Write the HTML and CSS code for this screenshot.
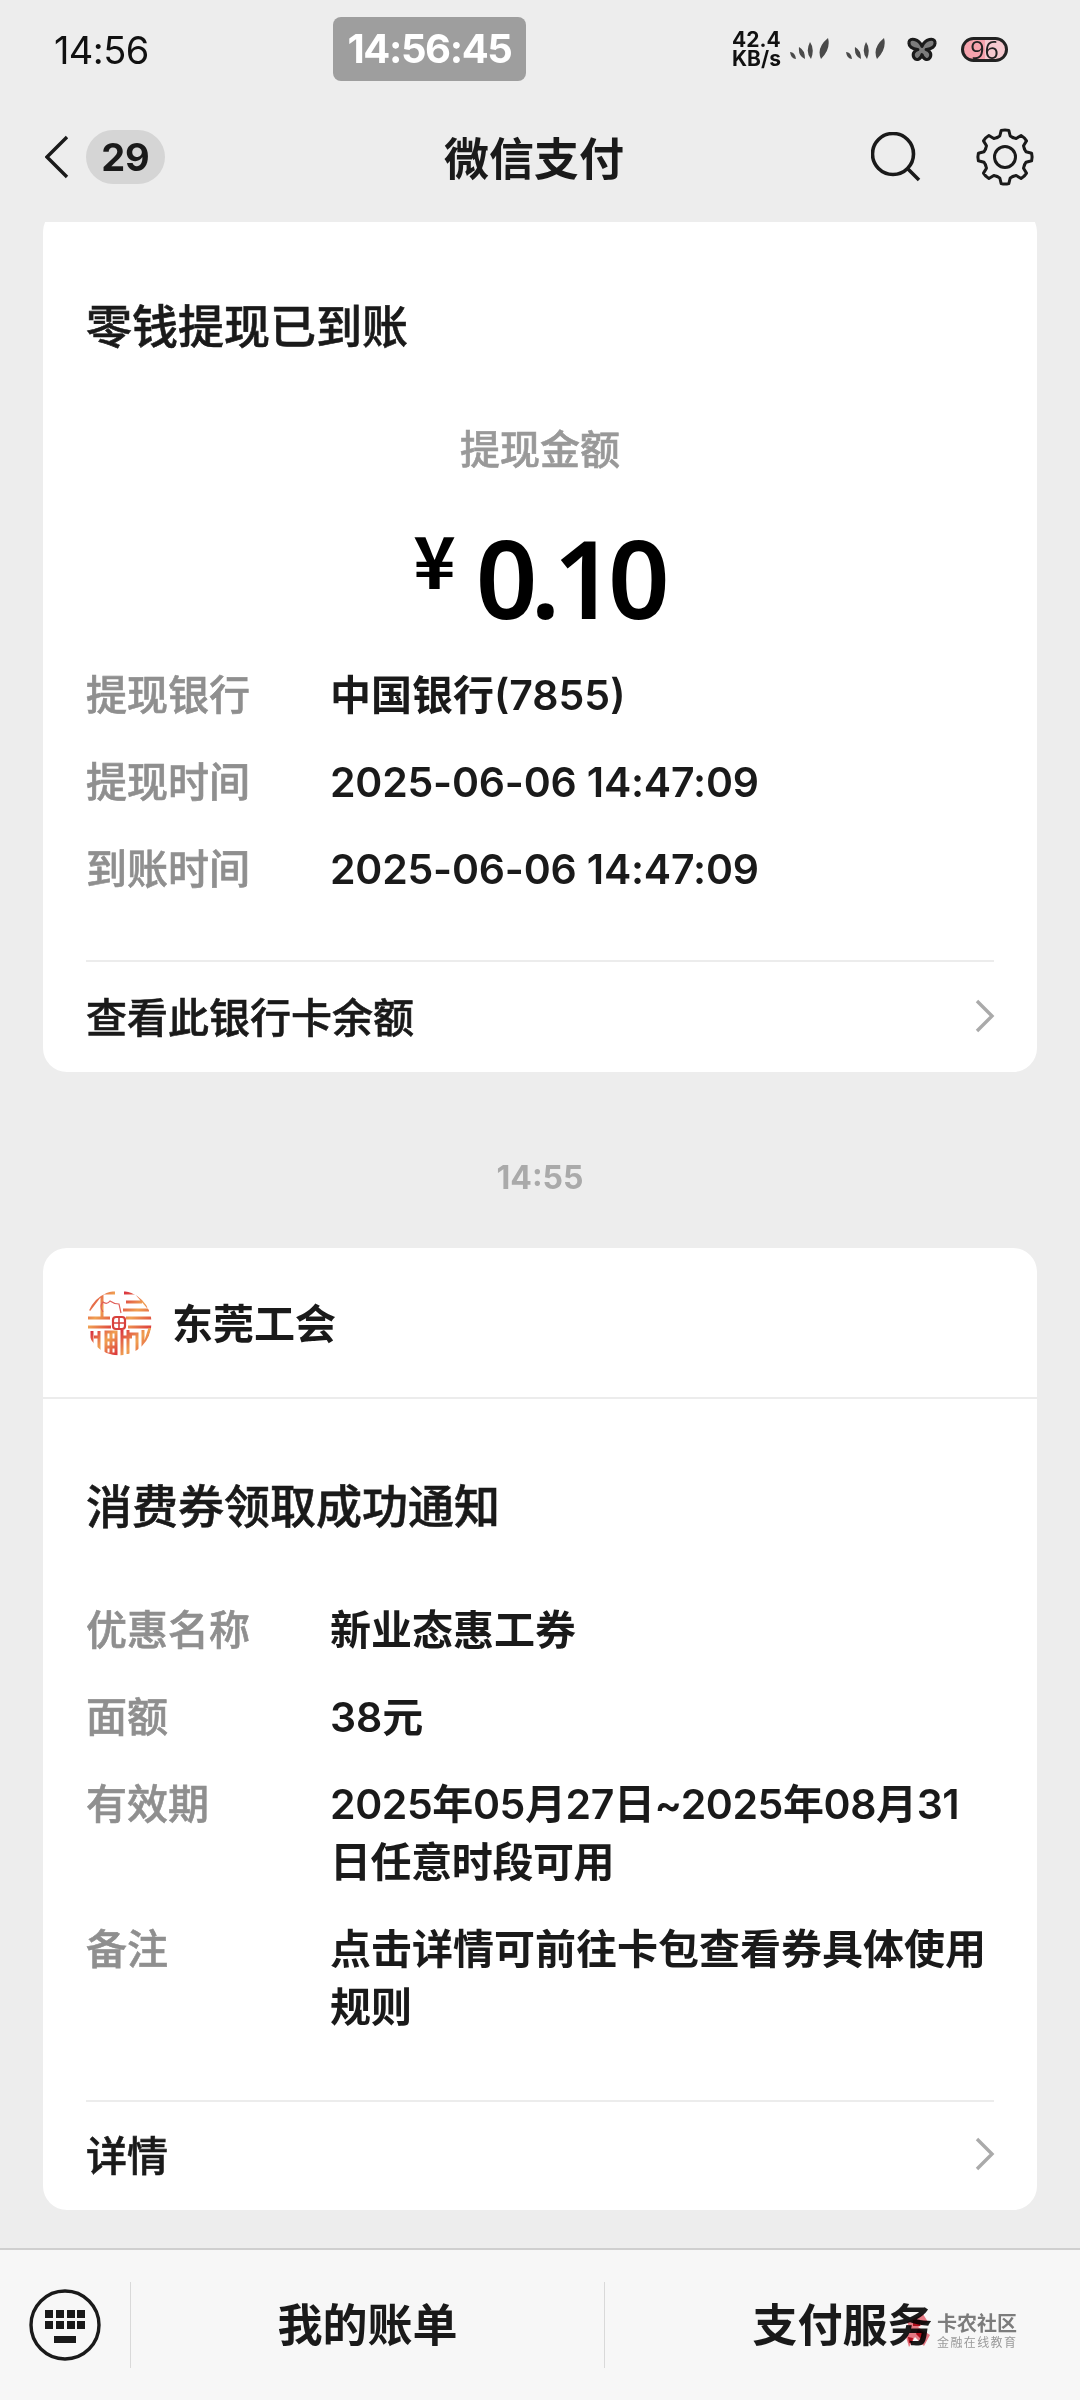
FILE: index.html
```html
<!DOCTYPE html>
<html lang="zh-CN">
<head>
<meta charset="utf-8">
<title>微信支付</title>
<link rel="stylesheet" href="styles.css">
</head>
<body>
<div class="phone">
  <header class="status">
    <span class="clock">14:56</span>
    <span class="timer">14:56:45</span>
    <div class="status-right">
      <div class="speed"><span>42.4</span><span>KB/s</span></div>
      <svg class="signal" viewBox="0 0 40 24"><path d="M0 15q5 0 6 7q-5 0-6-7zM9 10q6 3 6 12q-7-3-6-12zM20 5q5 7 1 17q-6-7-1-17zM38 1q3 11-7 21q-5-11 7-21z"/></svg>
      <svg class="signal s2" viewBox="0 0 40 24"><path d="M0 15q5 0 6 7q-5 0-6-7zM9 10q6 3 6 12q-7-3-6-12zM20 5q5 7 1 17q-6-7-1-17zM38 1q3 11-7 21q-5-11 7-21z"/></svg>
      <svg class="fly" viewBox="0 0 28 24"><path d="M14 9C11 2 2 0 1.500 5c-.5 4 3 6.500 8.500 7-4 1-5.500 5-3.500 8 2 3 6.500 1.500 7.500-3 1 4.500 5.500 6 7.500 3 2-3 .5-7-3.500-8 5.500-.5 9-3 8.500-7C26 0 17 2 14 9z" fill="#7c7c7c" stroke="#1b1b1b" stroke-width="3" stroke-linejoin="round"/></svg>
      <div class="battery"><span>96</span></div>
    </div>
  </header>

  <nav class="nav">
    <div class="nav-left">
      <svg class="back" viewBox="0 0 24 44"><path d="M22 2 2 22l20 20" fill="none" stroke="#1a1a1a" stroke-width="3.400"/></svg>
      <span class="count">29</span>
    </div>
    <h1 class="nav-title">微信支付</h1>
    <div class="nav-right">
      <svg class="search" viewBox="0 0 50 50"><circle cx="22" cy="22" r="20.500" fill="none" stroke="#1a1a1a" stroke-width="3.600"/><path d="m36 36 12 12" stroke="#1a1a1a" stroke-width="3.600"/></svg>
      <svg class="gear" viewBox="-30 -30 60 60">
        <defs><path id="tooth" d="M-8.040-19.400-5.200-21-3.800-26.600Q0-27.600 3.800-26.600L5.200-21 8.040-19.400" fill="none" stroke="#1a1a1a" stroke-width="3" stroke-linejoin="round" stroke-linecap="round"/></defs>
        <use href="#tooth"/><use href="#tooth" transform="rotate(45)"/><use href="#tooth" transform="rotate(90)"/><use href="#tooth" transform="rotate(135)"/><use href="#tooth" transform="rotate(180)"/><use href="#tooth" transform="rotate(225)"/><use href="#tooth" transform="rotate(270)"/><use href="#tooth" transform="rotate(315)"/>
        <circle r="10.500" fill="none" stroke="#1a1a1a" stroke-width="3"/>
      </svg>
    </div>
  </nav>

  <main class="feed">
    <section class="card card-first">
      <h2 class="card-title">零钱提现已到账</h2>
      <div class="amount-label">提现金额</div>
      <div class="amount"><span class="yen">¥</span><span class="sum">0.10</span></div>
      <dl class="rows">
        <div class="row"><dt>提现银行</dt><dd>中国银行(7855)</dd></div>
        <div class="row"><dt>提现时间</dt><dd class="num">2025-06-06 14:47:09</dd></div>
        <div class="row"><dt>到账时间</dt><dd class="num">2025-06-06 14:47:09</dd></div>
      </dl>
      <div class="link link-first">
        <span>查看此银行卡余额</span>
        <svg class="chev" viewBox="0 0 22 36"><path d="m3 3 15 15L3 33" fill="none" stroke="#aaa" stroke-width="3.400"/></svg>
      </div>
    </section>

    <div class="time">14:55</div>

    <section class="card">
      <div class="brand">
        <svg class="logo" viewBox="0 0 66 66">
          <defs>
            <linearGradient id="lg" x1="0" y1="0" x2="1" y2="1"><stop offset="0" stop-color="#d92f3f"/><stop offset=".5" stop-color="#f0a152"/><stop offset="1" stop-color="#dc3a3c"/></linearGradient>
            <clipPath id="lc"><circle cx="33" cy="33" r="32.500"/></clipPath>
          </defs>
          <g clip-path="url(#lc)" fill="none" stroke="url(#lg)" stroke-width="3">
            <path d="M3 20 16 3h13M16 3v24M2 28h22M2 37h23"/>
            <path d="M38 3h12l12 14M40 12h16M37 20h26M40 28h26M42 37h24"/>
            <path d="M6 41v20M13 41v22M8 47h6M20 42h10v22H20zM20 50h10M20 57h10M25 42v22"/>
            <path d="M36 40v26M36 47h10M42 40v24M42 44h9v20M57 40v20M64 38l-7 22"/>
            <path d="M17 22q-4-6 0-10 4 3 7-1 4 3 9 3l2 9" stroke="#e0605a" stroke-width="1.200"/>
          </g>
          <rect x="27" y="27" width="12" height="12" rx="3" fill="#fff" stroke="#d8413c" stroke-width="2.200"/>
          <path d="M33 27v12M27 33h12" stroke="#d8413c" stroke-width="1.600"/>
        </svg>
        <span class="brand-name">东莞工会</span>
      </div>
      <h2 class="card-title title-second">消费券领取成功通知</h2>
      <dl class="rows rows-second">
        <div class="row"><dt>优惠名称</dt><dd>新业态惠工券</dd></div>
        <div class="row"><dt>面额</dt><dd>38元</dd></div>
        <div class="row"><dt>有效期</dt><dd class="mixed">2025年05月27日~2025年08月31日任意时段可用</dd></div>
        <div class="row"><dt>备注</dt><dd>点击详情可前往卡包查看券具体使用规则</dd></div>
      </dl>
      <div class="link link-second">
        <span>详情</span>
        <svg class="chev" viewBox="0 0 22 36"><path d="m3 3 15 15L3 33" fill="none" stroke="#aaa" stroke-width="3.400"/></svg>
      </div>
    </section>
  </main>

  <footer class="bar">
    <div class="kb-cell">
      <svg class="kb" viewBox="0 0 72 74">
        <circle cx="36" cy="37" r="34" fill="none" stroke="#1a1a1a" stroke-width="3.400"/>
        <g fill="#1a1a1a"><rect x="16" y="22" width="8" height="8"/><rect x="27" y="22" width="8" height="8"/><rect x="38" y="22" width="8" height="8"/><rect x="48" y="22" width="8" height="8"/><rect x="16" y="33" width="8" height="8"/><rect x="27" y="33" width="8" height="8"/><rect x="38" y="33" width="8" height="8"/><rect x="48" y="33" width="8" height="8"/><rect x="25" y="48" width="22" height="7"/></g>
      </svg>
    </div>
    <div class="bar-item">我的账单</div>
    <div class="bar-item">支付服务</div>
    <div class="mark">
      <svg class="mark-icon" viewBox="0 0 28 34"><path d="M2 8 18 0l5 8-10 5 12 8-6 11-9-9-6 10-3-10 5-6z" fill="#ee7d88"/><path d="M8 6h7v6H8zM13 15l6 4-3 6-5-5zM3 23l5 1-1 5H4z" fill="#b50f1e"/></svg>
      <div class="mark-text"><span class="mark-a">卡农社区</span><span class="mark-b">金融在线教育</span></div>
    </div>
  </footer>
</div>
</body>
</html>
```

FILE: styles.css
```css
* { box-sizing: border-box; margin: 0; padding: 0; }
html, body { width: 1080px; height: 2400px; overflow: hidden; }
body { background: #ededed; color: #1a1a1a; font-family: "Noto Sans CJK SC", "Noto Sans", sans-serif; }
.phone { width: 1080px; height: 2400px; display: flex; flex-direction: column; }

.status { height: 100px; flex: none; display: flex; align-items: flex-start; padding: 17px 0 0 54px; }
.clock { font: 400 38px/66px Inter, sans-serif; color: #111; width: 279px; letter-spacing: -.6px; }
.timer { width: 193px; height: 64px; background: #9e9e9e; border-radius: 8px; color: #fff; font: 700 40px/64px Inter, sans-serif; text-align: center; letter-spacing: -1.400px; }
.status-right { display: flex; align-items: center; margin-left: 206px; height: 64px; }
.speed { display: flex; flex-direction: column; font: 700 21px/19px Inter, sans-serif; color: #111; width: 58px; }
.signal { width: 40px; height: 24px; fill: #4a4a4a; }
.s2 { margin-left: 16px; }
.fly { width: 30px; height: 25px; margin-left: 21px; }
.battery { width: 47px; height: 25px; margin-left: 24px; border: 3px solid #222; border-radius: 13px; background: linear-gradient(90deg, #f5a3ad 0 50%, #f5c9cf 50%); text-align: center; }
.battery span { display: block; font: 400 25px/19px "Open Sans", sans-serif; color: #222; }

.nav { height: 122px; flex: none; display: flex; align-items: center; padding: 0 0 8px 45px; position: relative; z-index: 2; background: #ededed; }
.nav-left { display: flex; align-items: center; width: 399px; }
.back { width: 24px; height: 44px; }
.count { width: 79px; height: 54px; margin-left: 17px; border-radius: 27px; background: #d5d5d5; font: 700 38px/54px Inter, sans-serif; text-align: center; }
.nav-title { font-size: 45px; line-height: 60px; font-weight: 700; width: 179px; white-space: nowrap; }
.nav-right { display: flex; align-items: center; margin-left: 248px; }
.search { width: 50px; height: 50px; }
.gear { width: 60px; height: 60px; margin-left: 54px; }

.feed { flex: 1; min-height: 0; overflow: hidden; padding: 0 43px; border-bottom: 2px solid #cfcfcf; }
.card { background: #fff; border-radius: 24px; }
.card-first { margin-top: -14px; padding: 84px 43px 0; height: 864px; }
.card-title { font-size: 46px; line-height: 62px; font-weight: 500; color: #1a1a1a; white-space: nowrap; -webkit-text-stroke: .6px #1a1a1a; }
.amount-label { margin-top: 66px; text-align: center; color: #999; font-size: 40px; line-height: 54px; font-weight: 500; -webkit-text-stroke: .6px #999; }
.amount { display: flex; justify-content: center; align-items: flex-start; color: #000; height: 120px; margin-top: 44px; }
.yen { font: 700 72px/80px "Noto Sans CJK SC", sans-serif; margin-right: 20px; margin-left: -4px; }
.sum { font: 600 108px/120px "Noto Sans", sans-serif; letter-spacing: -7px; }
.rows { display: flex; flex-direction: column; margin-top: 28px; }
.row { display: flex; font-size: 41px; line-height: 58px; margin-bottom: 29px; }
.row dt { width: 244px; flex: none; color: #8f8f8f; font-weight: 500; -webkit-text-stroke: .6px #8f8f8f; margin-top: -3px; }
.row dd { flex: 1; color: #1a1a1a; font-family: Inter, "Noto Sans CJK SC", sans-serif; font-weight: 600; word-break: break-all; }
.row .num { letter-spacing: -.2px; }
.row .mixed { letter-spacing: -.4px; }
.link { display: flex; align-items: center; justify-content: space-between; border-top: 2px solid #ececec; font-size: 41px; font-weight: 500; height: 108px; -webkit-text-stroke: .6px #1a1a1a; }
.link-first { margin-top: 33px; }
.chev { width: 22px; height: 36px; margin-top: 2px; margin-right: -2px; }

.time { margin-top: 79px; height: 54px; margin-bottom: 43px; text-align: center; color: #aaa; font: 700 32px/54px Inter, sans-serif; }

.brand { height: 151px; display: flex; align-items: center; padding-left: 43px; border-bottom: 2px solid #ececec; }
.logo { width: 66px; height: 66px; }
.brand-name { margin-left: 20px; font-size: 41px; font-weight: 700; margin-top: -4px; }
.title-second { margin: 73px 43px 0; }
.rows-second { margin: 67px 43px 0; }
.link-second { margin: 35px 43px 0; height: 110px; padding-bottom: 6px; }

.bar { height: 150px; flex: none; background: #f7f7f7; display: flex; align-items: center; position: relative; }
.kb-cell { width: 131px; height: 86px; display: flex; align-items: center; padding-left: 29px; border-right: 1px solid #d9d9d9; }
.kb { width: 72px; height: 74px; }
.bar-item { width: 474px; height: 86px; display: flex; align-items: center; justify-content: center; font-size: 45px; font-weight: 700; padding-bottom: 6px; }
.bar-item:nth-child(3) { width: 475px; }
.bar-item:nth-child(2) { border-right: 1px solid #d9d9d9; }
.mark { position: absolute; left: 905px; top: 62px; display: flex; align-items: center; mix-blend-mode: multiply; }
.mark-icon { width: 28px; height: 34px; }
.mark-text { display: flex; flex-direction: column; margin-left: 4px; color: #808080; }
.mark-a { font-size: 20px; line-height: 22px; font-weight: 700; }
.mark-b { font-size: 12px; line-height: 16px; letter-spacing: 1.400px; color: #a0a0a0; }
```
